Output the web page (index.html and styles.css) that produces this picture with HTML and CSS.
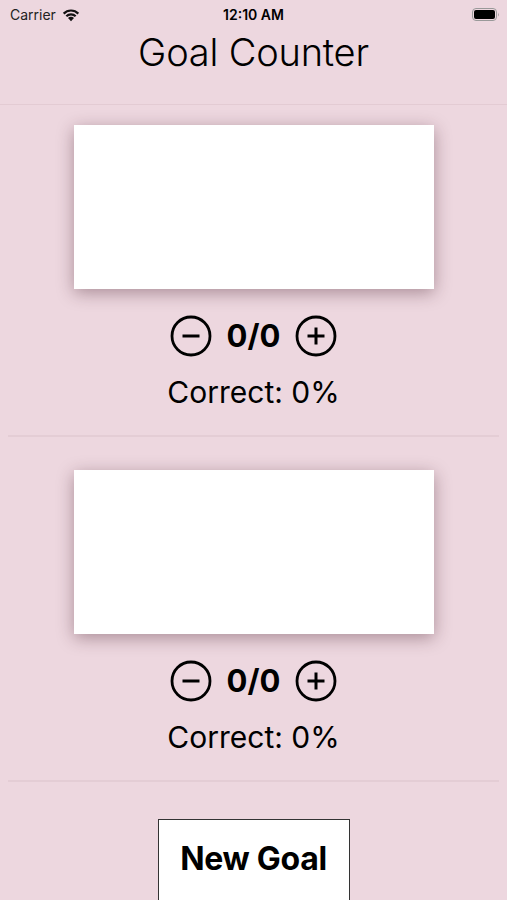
FILE: index.html
```html
<!DOCTYPE html>
<html>
<head>
<meta charset="utf-8">
<link rel="stylesheet" href="styles.css">
</head>
<body>
<div class="status">
  <div class="status-left">Carrier
    <svg class="wifi" width="20" height="15" viewBox="0 0 18 13"><path d="M9 12.6 L6.3 9.7 A3.8 3.8 0 0 1 11.7 9.7 Z" fill="#111"/><path d="M4.1 7.4 A6.9 6.9 0 0 1 13.9 7.4 L12.5 8.8 A4.9 4.9 0 0 0 5.5 8.8 Z" fill="#111"/><path d="M1.7 5.0 A10.2 10.2 0 0 1 16.3 5.0 L14.9 6.4 A8.2 8.2 0 0 0 3.1 6.4 Z" fill="#111"/></svg>
  </div>
  <div class="status-time">12:10 AM</div>
  <div class="status-right">
    <svg width="28" height="13" viewBox="0 0 28 13"><rect x="0.5" y="0.5" width="24" height="12" rx="3.5" fill="none" stroke="#999" stroke-width="1"/><rect x="2" y="2" width="21" height="9" rx="2" fill="#000"/><path d="M26 4.5 Q27.5 6.5 26 8.5 Z" fill="#999"/></svg>
  </div>
</div>
<header class="nav"><h1 class="title">Goal Counter</h1></header>

<section class="goal first">
  <div class="card"></div>
  <div class="controls">
    <svg class="btn" width="42" height="42" viewBox="0 0 42 42"><circle cx="21" cy="21" r="19" fill="none" stroke="#000" stroke-width="2.8"/><line x1="12.5" y1="21" x2="29.5" y2="21" stroke="#000" stroke-width="3"/></svg>
    <span class="count">0/0</span>
    <svg class="btn" width="42" height="42" viewBox="0 0 42 42"><circle cx="21" cy="21" r="19" fill="none" stroke="#000" stroke-width="2.8"/><line x1="12.5" y1="21" x2="29.5" y2="21" stroke="#000" stroke-width="3"/><line x1="21" y1="12.5" x2="21" y2="29.5" stroke="#000" stroke-width="3"/></svg>
  </div>
  <div class="correct">Correct: 0%</div>
</section>
<div class="sep"></div>
<section class="goal second">
  <div class="card"></div>
  <div class="controls">
    <svg class="btn" width="42" height="42" viewBox="0 0 42 42"><circle cx="21" cy="21" r="19" fill="none" stroke="#000" stroke-width="2.8"/><line x1="12.5" y1="21" x2="29.5" y2="21" stroke="#000" stroke-width="3"/></svg>
    <span class="count">0/0</span>
    <svg class="btn" width="42" height="42" viewBox="0 0 42 42"><circle cx="21" cy="21" r="19" fill="none" stroke="#000" stroke-width="2.8"/><line x1="12.5" y1="21" x2="29.5" y2="21" stroke="#000" stroke-width="3"/><line x1="21" y1="12.5" x2="21" y2="29.5" stroke="#000" stroke-width="3"/></svg>
  </div>
  <div class="correct">Correct: 0%</div>
</section>
<div class="sep"></div>
<div class="footer"><button class="new-goal">New Goal</button></div>
</body>
</html>
```
FILE: styles.css
```css
html, body {
  margin: 0;
  padding: 0;
  background: #edd7df;
  font-family: "Inter", "Liberation Sans", sans-serif;
  color: #000;
  overflow: hidden;
  height: 900px;
}
.status {
  height: 28px;
  display: flex;
  align-items: center;
  justify-content: space-between;
  padding: 0 7px 0 10px;
  position: relative;
}
.status-left {
  font-size: 14px;
  color: #222;
  display: flex;
  align-items: center;
  gap: 5px;
}
.status-time {
  position: absolute;
  left: 0;
  right: 0;
  text-align: center;
  font-size: 14px;
  font-weight: 600;
  top: 6px;
}
.status-right { display: flex; align-items: center; }
.nav {
  height: 77px;
  border-bottom: 1px solid #e3cbd3;
  box-sizing: border-box;
  padding-top: 2px;
}
.title {
  margin: 0;
  text-align: center;
  font-weight: 300;
  font-size: 38px;
  line-height: 44px;
  letter-spacing: -0.2px;
}
.goal {
  display: flex;
  flex-direction: column;
  align-items: center;
}
.goal.first { padding-top: 20px; }
.goal.second { padding-top: 33px; }
.card {
  width: 360px;
  height: 164px;
  background: #fff;
  box-shadow: 0 4px 16px rgba(60, 20, 35, 0.38);
}
.controls {
  margin-top: 26px;
  display: flex;
  align-items: center;
  gap: 15px;
  height: 42px;
}
.count {
  font-weight: 700;
  font-size: 31px;
  line-height: 42px;
}
.correct {
  margin-top: 17px;
  font-size: 30px;
  line-height: 36px;
}
.sep {
  margin: 25px 8px 0;
  height: 2px;
  background: #e4cdd5;
}
.footer {
  display: flex;
  justify-content: center;
  padding-top: 37px;
}
.new-goal {
  width: 192px;
  height: 86px;
  background: #fff;
  border: 1px solid #333;
  font-family: "Inter", "Liberation Sans", sans-serif;
  font-weight: 700;
  font-size: 32px;
  padding: 0 0 8px;
  color: #000;
  letter-spacing: -0.3px;
}
```
